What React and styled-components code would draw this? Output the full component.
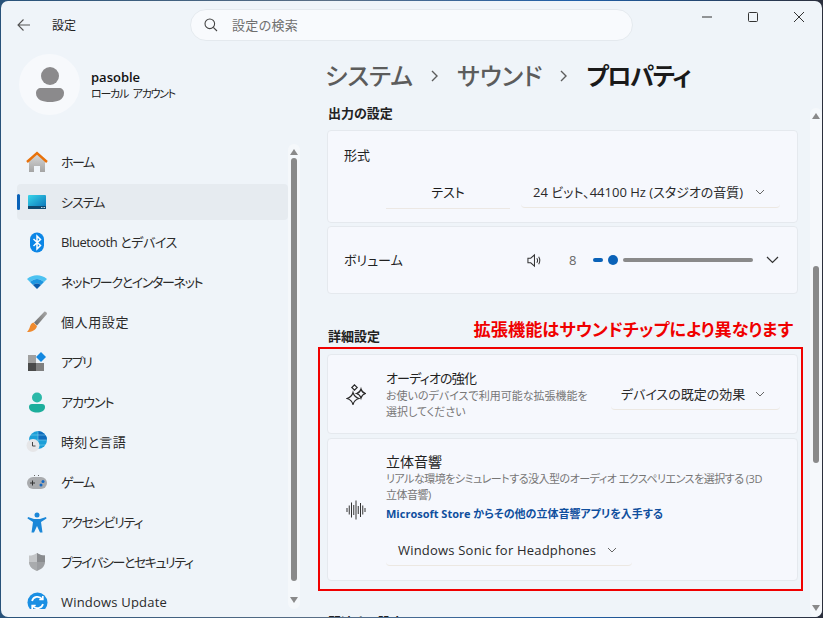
import React from 'react';
import styled, { createGlobalStyle } from 'styled-components';

const Global = createGlobalStyle`
  html, body { margin: 0; padding: 0; height: 100%; overflow: hidden; }
  body {
    font-family: "Open Sans", "Noto Sans CJK JP", sans-serif;
    font-feature-settings: "palt";
    color: #1b1b1b;
  }
  #root { height: 100%; }
`;

const Desktop = styled.div`
  width: 823px;
  height: 618px;
  box-sizing: border-box;
  padding: 1px;
  background: linear-gradient(90deg, #28527a, #5a6f86 40%, #1f5fa8 70%, #2b2f3c);
`;

const Win = styled.div`
  height: 100%;
  display: flex;
  flex-direction: column;
  background: #eff4f9;
  border-radius: 7px;
  overflow: hidden;
`;

const TitleBar = styled.header`
  height: 48px;
  flex: none;
  display: flex;
  align-items: flex-start;
`;

const BackBtn = styled.div`
  width: 18px;
  margin: 17px 0 0 16px;
  display: flex;
  color: #555;
`;

const AppName = styled.div`
  margin: 16px 0 0 17px;
  width: 138px;
  font-size: 12px;
  line-height: 18px;
  color: #222;
`;

const SearchBox = styled.div`
  width: 443px;
  height: 32px;
  margin-top: 8px;
  box-sizing: border-box;
  display: flex;
  align-items: center;
  gap: 14px;
  padding-left: 13px;
  background: #f8fafd;
  border: 1px solid #e4e9ee;
  border-radius: 16px;
  font-size: 13px;
  letter-spacing: 0.3px;
  color: #6f6f6f;
`;

const SearchText = styled.span`
  margin-bottom: 2px;
`;

const Controls = styled.div`
  margin-left: auto;
  display: flex;
  color: #333;
`;

const ControlBtn = styled.div`
  width: 46px;
  height: 32px;
  display: flex;
  align-items: center;
  justify-content: center;
`;

const Body = styled.div`
  flex: 1;
  min-height: 0;
  display: flex;
`;

const Sidebar = styled.aside`
  width: 300px;
  flex: none;
  display: flex;
  flex-direction: column;
`;

const Profile = styled.div`
  display: flex;
  align-items: center;
  gap: 11px;
  margin: 5px 0 0 18px;
`;

const Avatar = styled.div`
  width: 61px;
  height: 61px;
  border-radius: 50%;
  background: #f7f9fc;
  display: flex;
  align-items: center;
  justify-content: center;
`;

const UserName = styled.div`
  font-size: 13px;
  font-weight: 600;
  line-height: 18px;
  color: #111;
`;

const UserKind = styled.div`
  font-size: 11px;
  line-height: 16px;
  letter-spacing: -1.25px;
  word-spacing: 3px;
  color: #222;
`;

const NavArea = styled.div`
  flex: 1;
  min-height: 0;
  display: flex;
  margin-top: 29px;
  margin-bottom: 8px;
  overflow: hidden;
`;

const NavList = styled.nav`
  width: 271px;
  margin-left: 16px;
  flex: none;
`;

const NavRow = styled.div`
  position: relative;
  height: 36px;
  margin-bottom: 4px;
  display: flex;
  align-items: center;
  border-radius: 4px;
  background: ${p => (p.$active ? '#e6ebf0' : 'transparent')};
  &::before {
    content: '';
    display: ${p => (p.$active ? 'block' : 'none')};
    position: absolute;
    left: 0;
    top: 10px;
    width: 3px;
    height: 16px;
    border-radius: 2px;
    background: #0a62b8;
  }
`;

const NavIcon = styled.div`
  width: 24px;
  height: 24px;
  margin-left: 8px;
  margin-right: 12px;
  flex: none;
  display: flex;
  align-items: center;
  justify-content: center;
`;

const NavLabel = styled.span`
  font-size: 13px;
  margin-bottom: 1px;
  letter-spacing: ${p => p.$track || 0}px;
  color: #2a2a2a;
  white-space: nowrap;
`;

const ScrollTrack = styled.div`
  width: ${p => p.$w || 12}px;
  margin-top: ${p => p.$top || 0}px;
  flex: none;
  box-sizing: border-box;
  display: flex;
  flex-direction: column;
  align-items: center;
  background: #f5f8fb;
  border-radius: 6px;
`;

const Arrow = styled.div`
  width: 0;
  height: 0;
  flex: none;
  margin-top: ${p => p.$top || 0}px;
  border-left: 4px solid transparent;
  border-right: 4px solid transparent;
  ${p => (p.$down ? 'border-top: 6px solid #8a8a8a;' : 'border-bottom: 6px solid #8a8a8a;')}
`;

const Thumb = styled.div`
  width: 6px;
  flex: none;
  height: ${p => p.$h}px;
  margin-top: ${p => p.$top}px;
  background: #8a8a8a;
  border-radius: 3px;
`;

const Main = styled.main`
  flex: 1;
  min-width: 0;
  display: flex;
  flex-direction: column;
`;

const PageTitle = styled.h1`
  margin: 7px 0 0 24px;
  height: 40px;
  flex: none;
  display: flex;
  align-items: center;
  font-size: 24.2px;
  font-weight: 500;
  line-height: 40px;
  color: #5c5c5c;
  white-space: nowrap;
`;

const Crumb = styled.span`
  color: ${p => (p.$current ? '#1a1a1a' : '#5c5c5c')};
  font-weight: ${p => (p.$current ? 700 : 500)};
  letter-spacing: ${p => (p.$current ? -1.5 : 0)}px;
`;

const CrumbSep = styled.span`
  display: flex;
  width: 44px;
  justify-content: center;
  color: #5c5c5c;
`;

const Scroller = styled.div`
  flex: 1;
  min-height: 0;
  display: flex;
  justify-content: space-between;
  margin-top: 7px;
`;

const Content = styled.div`
  width: 486px;
  box-sizing: border-box;
  margin-left: 17px;
  padding: 0 6px 0 9px;
  overflow: hidden;
`;

const SectionHead = styled.div`
  display: flex;
  justify-content: space-between;
  align-items: flex-end;
  height: 20px;
  margin-top: ${p => p.$top || 0}px;
  margin-bottom: ${p => p.$bottom || 0}px;
  padding-left: 1px;
`;

const SectionTitle = styled.h2`
  margin: 0;
  font-size: 13px;
  font-weight: 600;
  line-height: 20px;
  color: #222;
  white-space: nowrap;
`;

const Annotation = styled.span`
  font-size: 17.2px;
  font-weight: 700;
  line-height: 20px;
  color: #f00000;
  margin-bottom: 6px;
  margin-right: 5px;
  white-space: nowrap;
`;

const Card = styled.section`
  box-sizing: border-box;
  height: ${p => p.$h}px;
  margin-bottom: 3px;
  background: #f6f8fd;
  border: 1px solid #e5e9ee;
  border-radius: 4px;
`;

const FormatCard = styled(Card)`
  padding: 14px 17px 0 16px;
`;

const FormatRow = styled.div`
  display: flex;
  margin: 11px 0 0 42px;
  gap: 11px;
`;

const TestBtn = styled.div`
  width: 124px;
  height: 32px;
  line-height: 32px;
  text-align: center;
  font-size: 13px;
  border-bottom: 1px solid #ece8e4;
`;

const Select = styled.div`
  width: ${p => p.$w}px;
  height: 32px;
  box-sizing: border-box;
  padding: 0 15px 0 ${p => p.$pad || 12}px;
  display: flex;
  align-items: center;
  justify-content: space-between;
  font-size: ${p => p.$size || 13}px;
  letter-spacing: ${p => p.$spacing || 0}px;
  white-space: nowrap;
  color: #2a2a2a;
  border-bottom: 1px solid #ece8e2;
  border-radius: 4px;
`;

const RowLabel = styled.div`
  font-size: 13px;
  line-height: 20px;
  color: #222;
`;

const VolumeCard = styled(Card)`
  display: flex;
  align-items: center;
  padding: 0 18px 0 16px;
`;

const VolumeIcon = styled.div`
  margin-left: auto;
  display: flex;
`;

const VolumeValue = styled.span`
  width: 12px;
  margin: 0 12px 0 28px;
  font-size: 13px;
  color: #666;
`;

const Slider = styled.div`
  width: 160px;
  height: 18px;
  display: flex;
  align-items: center;
`;

const SliderFill = styled.div`
  width: 10px;
  height: 4px;
  background: #0a62b8;
  border-radius: 2px;
`;

const SliderKnob = styled.div`
  width: 10px;
  height: 10px;
  margin: 0 5px;
  border-radius: 50%;
  background: #0a62b8;
`;

const SliderRest = styled.div`
  flex: 1;
  height: 4px;
  background: #8a8a8a;
  border-radius: 2px;
`;

const VolumeChevron = styled.div`
  display: flex;
  margin-left: 13px;
`;

const Highlight = styled.div`
  box-sizing: border-box;
  width: 485px;
  height: 244px;
  margin-left: -9px;
  margin-top: 1px;
  padding: 5px 3px 0 7px;
  border: 2px solid #f00000;
`;

const FeatureCard = styled(Card)`
  display: flex;
  align-items: ${p => p.$align || 'center'};
  margin-bottom: 4px;
`;

const FeatureIcon = styled.div`
  width: 55px;
  padding-right: 3px;
  flex: none;
  align-self: center;
  display: flex;
  justify-content: center;
`;

const FeatureText = styled.div`
  width: 205px;
  flex: none;
`;

const FeatureBody = styled.div`
  flex: 1;
  min-width: 0;
  padding: 13px 30px 0 0;
`;

const FeatureTitle = styled.div`
  font-size: ${p => p.$size || 13}px;
  line-height: 19px;
  letter-spacing: ${p => p.$track || 0}px;
  color: #222;
`;

const FeatureDesc = styled.div`
  font-size: 11px;
  line-height: 16px;
  letter-spacing: ${p => p.$track || 0}px;
  color: #767676;
`;

const StoreLink = styled.a`
  display: block;
  margin-top: 2px;
  font-size: 11px;
  font-weight: 700;
  line-height: 17px;
  white-space: nowrap;
  color: #0f4f9e;
`;

const FeatureSelect = styled.div`
  margin-left: auto;
  margin-right: 17px;
`;

const SonicSelect = styled.div`
  margin-top: 12px;
`;

const Chevron = () => (
  <svg width="10" height="6" viewBox="0 0 10 6" fill="none" stroke="#666" strokeWidth="1">
    <path d="M1 1l4 4 4-4" />
  </svg>
);

const BigChevron = () => (
  <svg width="13" height="8" viewBox="0 0 13 8" fill="none" stroke="#333" strokeWidth="1.2">
    <path d="M1 1l5.5 5.500L12 1" />
  </svg>
);

const CrumbChevron = () => (
  <svg width="10" height="14" viewBox="0 0 10 14" fill="none" stroke="currentColor" strokeWidth="1.4">
    <path d="M2 2l5 5-5 5" />
  </svg>
);

const sparkle = (cx, cy, r) => {
  const k = r * 0.22;
  return `M${cx} ${cy - r}Q${cx + k} ${cy - k} ${cx + r} ${cy}Q${cx + k} ${cy + k} ${cx} ${cy + r}Q${cx - k} ${cy + k} ${cx - r} ${cy}Q${cx - k} ${cy - k} ${cx} ${cy - r}z`;
};

const EnhanceIcon = () => (
  <svg width="20" height="21" viewBox="0 0 20 21" fill="none" stroke="#2a2a2a" strokeWidth="1.2">
    <path d="M8.500 0.800l2.700 2.700-2.700 2.700-2.700-2.700z" />
    <path d={sparkle(15, 9.5, 4.5)} />
    <path d={sparkle(7, 14.5, 6)} />
  </svg>
);

const HomeIcon = () => (
  <svg width="22" height="22" viewBox="0 0 22 22">
    <defs>
      <linearGradient id="hw" x1="0" y1="0" x2="0" y2="1"><stop offset="0" stopColor="#d8d8d8" /><stop offset="1" stopColor="#a4a4a4" /></linearGradient>
    </defs>
    <path d="M3 10l8-7 8 7v11h-5v-6H8v6H3z" fill="url(#hw)" />
    <path d="M1 11l10-9 10 9" fill="none" stroke="#e8710a" strokeWidth="2.4" />
  </svg>
);

const SystemIcon = () => (
  <svg width="20" height="16" viewBox="0 0 20 16">
    <defs>
      <linearGradient id="sy" x1="0" y1="0" x2="1" y2="1"><stop offset="0" stopColor="#38d6ea" /><stop offset="1" stopColor="#0a72b8" /></linearGradient>
    </defs>
    <rect x="1" y="1" width="18" height="13" rx="1" fill="url(#sy)" />
    <rect x="1" y="12" width="18" height="3" fill="#10496f" />
    <path d="M14 13.500h1.500M16.500 13.500H18" stroke="#b9d6e6" strokeWidth="1" />
  </svg>
);

const BluetoothIcon = () => (
  <svg width="16" height="21" viewBox="0 0 16 21">
    <rect x="1" y="0.500" width="14" height="20" rx="7" fill="#0c86e6" />
    <path d="M4.500 7l7 6.500L8 17V4l3.500 3.500L4.500 14" fill="none" stroke="#fff" strokeWidth="1.5" />
  </svg>
);

const WifiIcon = () => (
  <svg width="22" height="16" viewBox="0 0 22 16">
    <path d="M1 5C7 0 15 0 21 5l-3 3C13 4 9 4 4 8z" fill="#4cc2f1" />
    <path d="M4 8c5-4 9-4 14 0l-3 3c-3-2-5-2-8 0z" fill="#1e96e0" />
    <path d="M7 11c3-2 5-2 8 0l-4 4z" fill="#0b5cab" />
  </svg>
);

const BrushIcon = () => (
  <svg width="22" height="22" viewBox="0 0 22 22">
    <defs>
      <linearGradient id="br" x1="1" y1="0" x2="0" y2="1"><stop offset="0" stopColor="#a8a8a8" /><stop offset="1" stopColor="#6a6a6a" /></linearGradient>
    </defs>
    <path d="M18.500 0.500c1.500 0 2.500 1 2.500 2.500L11 14.500 8 11.500z" fill="url(#br)" />
    <path d="M7.500 11.500l3.500 3.500c-1 4-5 6-10 6 2-2 2.500-4 3-5.500 .6-2.200 2-3.500 3.500-4z" fill="#ef8a2e" />
  </svg>
);

const AppsIcon = () => (
  <svg width="20" height="20" viewBox="0 0 20 20">
    <rect x="1" y="3" width="8" height="8" fill="#a0a0a0" />
    <rect x="1" y="11" width="8" height="8" fill="#4a4a4a" />
    <rect x="9" y="11" width="8" height="8" fill="#808080" />
    <path d="M14 0l5 5-5 5-5-5z" fill="#1488e0" />
  </svg>
);

const AccountIcon = () => (
  <svg width="18" height="21" viewBox="0 0 18 21">
    <circle cx="9" cy="5.500" r="5" fill="#2bb8a8" />
    <path d="M1 15c0-2 1-3 3-3h10c2 0 3 1 3 3 0 4-4 5.500-8 5.500S1 19 1 15z" fill="#1cae9c" />
  </svg>
);

const TimeIcon = () => (
  <svg width="22" height="22" viewBox="0 0 22 22">
    <circle cx="12" cy="9" r="9" fill="#1c9fd8" />
    <path d="M12 0a9 9 0 0 1 9 9h-9z" fill="#0f6cbd" />
    <path d="M12 0v18M3 9h18M5 4h14M5 14h14" stroke="#7fd0ee" strokeWidth="0.6" fill="none" />
    <circle cx="7" cy="14.500" r="6.500" fill="#e6e6e8" />
    <path d="M6.500 11v4h3" fill="none" stroke="#444" strokeWidth="1" />
  </svg>
);

const GameIcon = () => (
  <svg width="22" height="15" viewBox="0 0 22 15">
    <rect x="1" y="2" width="20" height="12" rx="6" fill="#a9abae" />
    <path d="M4 8h5M6.500 5.500v5" stroke="#333" strokeWidth="1" />
    <circle cx="15" cy="10" r="1.500" fill="#1268c4" />
    <circle cx="17" cy="6.500" r="1.500" fill="#1268c4" />
    <path d="M8 0.500h1M12 0.500h1" stroke="#666" strokeWidth="1" />
  </svg>
);

const AccessIcon = () => (
  <svg width="20" height="21" viewBox="0 0 20 21">
    <circle cx="10" cy="3" r="2.500" fill="#1b87d8" />
    <path d="M1 5l6 2h6l6-2 .5 1.500L14 10l1.500 10.500h-2.500L10 14l-3 6.500H4.500L6 10 .5 6.500z" fill="#1b87d8" />
  </svg>
);

const ShieldIcon = () => (
  <svg width="20" height="20" viewBox="0 0 20 20">
    <path d="M10 1c3 2 5 2.500 8 2.500V10c0 4.500-4 7.500-8 9z" fill="#9c9ea1" />
    <path d="M10 1C7 3 5 3.500 2 3.500V10c0 4.500 4 7.500 8 9z" fill="#c4c6c8" />
    <path d="M2 10h8v9c-4-1.500-8-4.500-8-9z" fill="#a9abad" />
    <path d="M18 10h-8V1c3 2 5 2.500 8 2.500z" fill="#8a8c8f" />
  </svg>
);

const UpdateIcon = () => (
  <svg width="21" height="21" viewBox="0 0 21 21">
    <circle cx="10.500" cy="10.500" r="10" fill="#1a8fe3" />
    <path d="M5 9a5.700 5.700 0 0 1 10-2M16 12a5.700 5.700 0 0 1-10 2" fill="none" stroke="#fff" strokeWidth="1.7" />
    <path d="M15.800 4v3.500h-3.500M5.200 17v-3.500h3.500" fill="none" stroke="#fff" strokeWidth="1.7" />
  </svg>
);

const navItems = [
  { label: 'ホーム', icon: <HomeIcon />, track: -1.5 },
  { label: 'システム', icon: <SystemIcon />, active: true, track: -1 },
  { label: 'Bluetooth とデバイス', icon: <BluetoothIcon />, track: -0.4 },
  { label: 'ネットワークとインターネット', icon: <WifiIcon />, track: -1.35 },
  { label: '個人用設定', icon: <BrushIcon />, track: 0.6 },
  { label: 'アプリ', icon: <AppsIcon />, track: -1.4 },
  { label: 'アカウント', icon: <AccountIcon />, track: -1 },
  { label: '時刻と言語', icon: <TimeIcon />, track: 0.3 },
  { label: 'ゲーム', icon: <GameIcon />, track: -1.5 },
  { label: 'アクセシビリティ', icon: <AccessIcon />, track: -1.25 },
  { label: 'プライバシーとセキュリティ', icon: <ShieldIcon />, track: -1.45 },
  { label: 'Windows Update', icon: <UpdateIcon />, track: 0.2 }
];

const waveBars = [4, 9, 15, 10, 19, 8, 14, 9, 4];

export default function App() {
  return (
    <Desktop>
      <Global />
      <Win>
        <TitleBar>
          <BackBtn>
            <svg width="14" height="14" viewBox="0 0 14 14" fill="none" stroke="currentColor" strokeWidth="1.1">
              <path d="M13 7H1M6.500 1.500L1 7l5.500 5.500" />
            </svg>
          </BackBtn>
          <AppName>設定</AppName>
          <SearchBox>
            <svg width="14" height="14" viewBox="0 0 14 14" fill="none" stroke="#444" strokeWidth="1.1">
              <circle cx="5.800" cy="5.800" r="4.800" />
              <path d="M9.300 9.300L13 13" />
            </svg>
            <SearchText>設定の検索</SearchText>
          </SearchBox>
          <Controls>
            <ControlBtn>
              <svg width="10" height="10" viewBox="0 0 10 10" stroke="currentColor"><path d="M0 5h10" /></svg>
            </ControlBtn>
            <ControlBtn>
              <svg width="10" height="10" viewBox="0 0 10 10" fill="none" stroke="currentColor"><rect x="0.500" y="0.500" width="9" height="9" rx="1" /></svg>
            </ControlBtn>
            <ControlBtn>
              <svg width="10" height="10" viewBox="0 0 10 10" stroke="currentColor"><path d="M0 0l10 10M10 0L0 10" /></svg>
            </ControlBtn>
          </Controls>
        </TitleBar>
        <Body>
          <Sidebar>
            <Profile>
              <Avatar>
                <svg width="28" height="36" viewBox="0 0 28 36" fill="#8b8a8c">
                  <circle cx="14" cy="9" r="9" />
                  <path d="M0 26c0-3 2-5 5-5h18c3 0 5 2 5 5 0 7-7 9-14 9S0 33 0 26z" />
                </svg>
              </Avatar>
              <div>
                <UserName>pasoble</UserName>
                <UserKind>ローカル アカウント</UserKind>
              </div>
            </Profile>
            <NavArea>
              <NavList>
                {navItems.map(item => (
                  <NavRow key={item.label} $active={item.active}>
                    <NavIcon>{item.icon}</NavIcon>
                    <NavLabel $track={item.track}>{item.label}</NavLabel>
                  </NavRow>
                ))}
              </NavList>
              <ScrollTrack>
                <Arrow $top={5} />
                <Thumb $top={3} $h={423} />
                <Arrow $down $top={16} />
              </ScrollTrack>
            </NavArea>
          </Sidebar>
          <Main>
            <PageTitle>
              <Crumb>システム</Crumb>
              <CrumbSep><CrumbChevron /></CrumbSep>
              <Crumb>サウンド</Crumb>
              <CrumbSep><CrumbChevron /></CrumbSep>
              <Crumb $current>プロパティ</Crumb>
            </PageTitle>
            <Scroller>
              <Content>
                <SectionHead $bottom={7}><SectionTitle>出力の設定</SectionTitle></SectionHead>
                <FormatCard $h={93}>
                  <RowLabel>形式</RowLabel>
                  <FormatRow>
                    <TestBtn>テスト</TestBtn>
                    <Select $w={259}>
                      24 ビット、44100 Hz (スタジオの音質)
                      <Chevron />
                    </Select>
                  </FormatRow>
                </FormatCard>
                <VolumeCard $h={68}>
                  <RowLabel>ボリューム</RowLabel>
                  <VolumeIcon>
                    <svg width="14" height="15" viewBox="0 0 15 15" fill="none" stroke="#333" strokeWidth="1.1">
                      <path d="M1 5h3l4-3.500v12L4 10H1zM10.500 5c1 1.500 1 3.500 0 5M12.500 3.500c1.500 2.500 1.500 5.500 0 8" />
                    </svg>
                  </VolumeIcon>
                  <VolumeValue>8</VolumeValue>
                  <Slider>
                    <SliderFill />
                    <SliderKnob />
                    <SliderRest />
                  </Slider>
                  <VolumeChevron><BigChevron /></VolumeChevron>
                </VolumeCard>
                <SectionHead $top={32}>
                  <SectionTitle>詳細設定</SectionTitle>
                  <Annotation>拡張機能はサウンドチップにより異なります</Annotation>
                </SectionHead>
                <Highlight>
                  <FeatureCard $h={80}>
                    <FeatureIcon><EnhanceIcon /></FeatureIcon>
                    <FeatureText>
                      <FeatureTitle $track={-0.8}>オーディオの強化</FeatureTitle>
                      <FeatureDesc>お使いのデバイスで利用可能な拡張機能を選択してください</FeatureDesc>
                    </FeatureText>
                    <FeatureSelect>
                      <Select $w={169} $pad={10} $size={13}>
                        デバイスの既定の効果
                        <Chevron />
                      </Select>
                    </FeatureSelect>
                  </FeatureCard>
                  <FeatureCard $h={143} $align="flex-start">
                    <FeatureIcon>
                      <svg width="20" height="20" viewBox="0 0 20 20" stroke="#333" strokeWidth="1">
                        {waveBars.map((h, i) => (
                          <path key={i} d={`M${1 + i * 2.25} ${10 - h / 2}v${h}`} />
                        ))}
                      </svg>
                    </FeatureIcon>
                    <FeatureBody>
                      <FeatureTitle $size={14}>立体音響</FeatureTitle>
                      <FeatureDesc $track={-0.5}>リアルな環境をシミュレートする没入型のオーディオ エクスペリエンスを選択する (3D 立体音響)</FeatureDesc>
                      <StoreLink>Microsoft Store からその他の立体音響アプリを入手する</StoreLink>
                      <SonicSelect>
                        <Select $w={246} $pad={12} $size={13} $spacing={0.2}>
                          Windows Sonic for Headphones
                          <Chevron />
                        </Select>
                      </SonicSelect>
                    </FeatureBody>
                  </FeatureCard>
                </Highlight>
                <SectionHead $top={21}><SectionTitle>関連する設定</SectionTitle></SectionHead>
              </Content>
              <ScrollTrack $w={12} $top={5}>
                <Arrow $top={5} />
                <Thumb $top={147} $h={197} />
                <Arrow $down $top={142} />
              </ScrollTrack>
            </Scroller>
          </Main>
        </Body>
      </Win>
    </Desktop>
  );
}
